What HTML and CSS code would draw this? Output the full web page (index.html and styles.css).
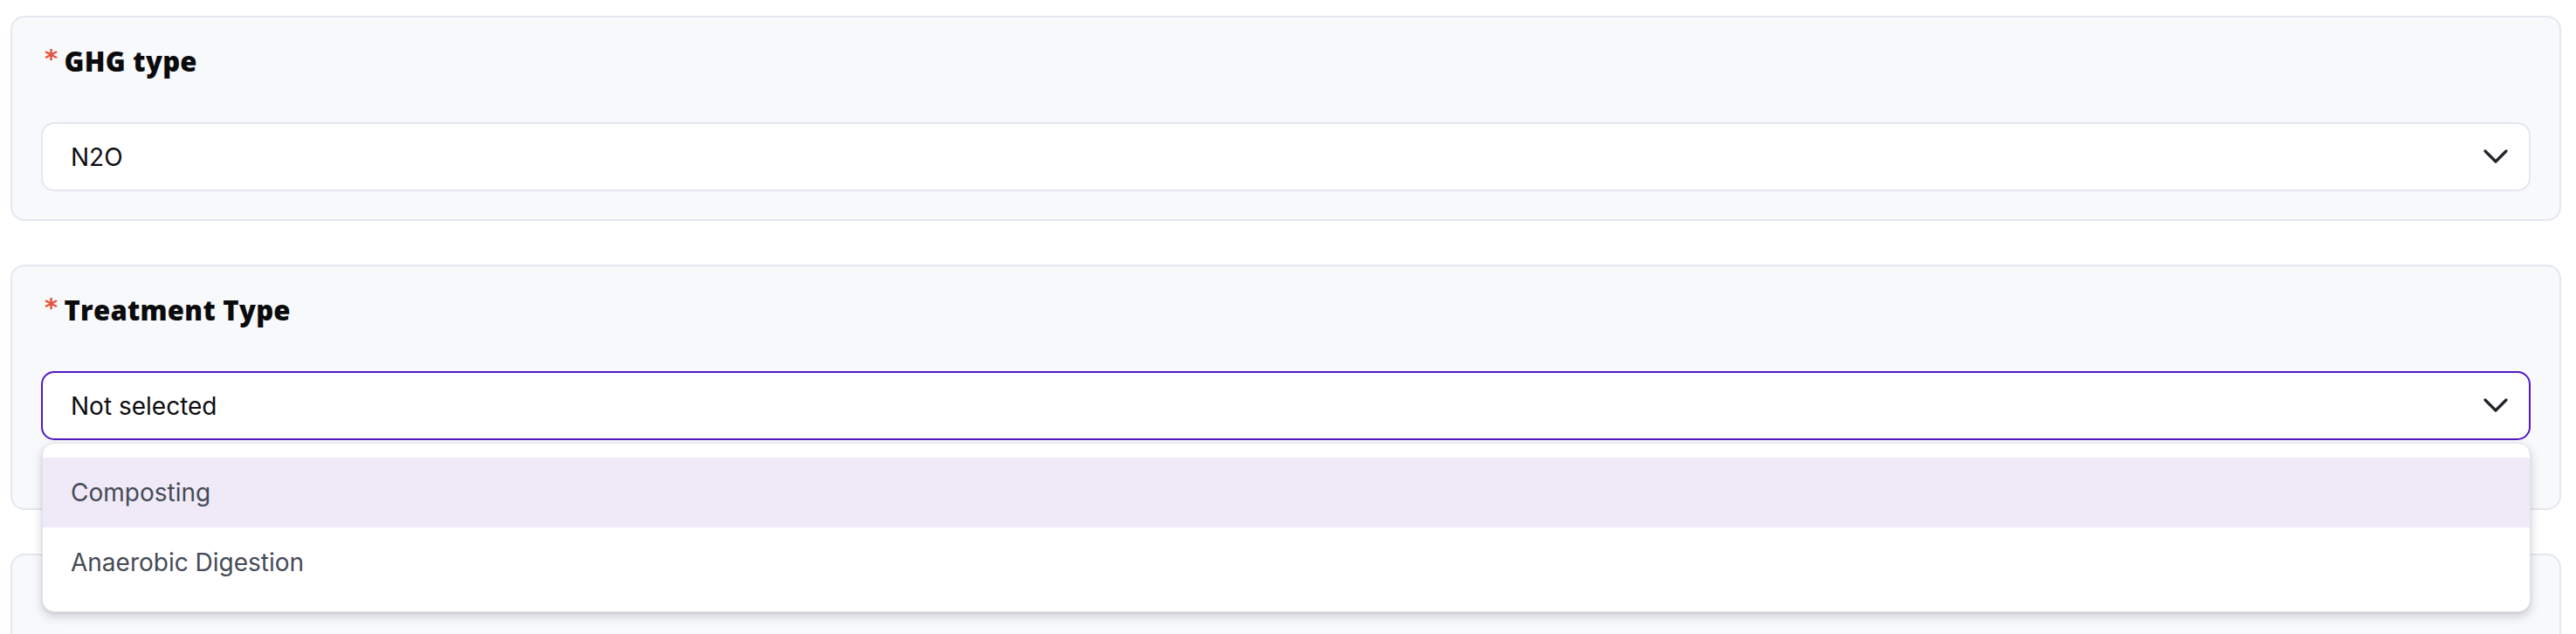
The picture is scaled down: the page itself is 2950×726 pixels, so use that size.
FILE: index.html
```html
<!DOCTYPE html>
<html lang="en">
<head>
<meta charset="utf-8">
<title>Form</title>
<link rel="stylesheet" href="styles.css">
</head>
<body>
<main class="form">
  <section class="card">
    <div class="label"><span class="req">*</span>GHG type</div>
    <div class="select">
      <span class="value">N2O</span>
      <svg class="chev" width="28" height="17" viewBox="0 0 28 17"><path d="M2 2 L14 14 L26 2" fill="none" stroke="#22242b" stroke-width="3.2" stroke-linecap="round" stroke-linejoin="round"/></svg>
    </div>
  </section>
  <section class="card card-open">
    <div class="label"><span class="req">*</span>Treatment Type</div>
    <div class="select-wrap">
      <div class="select focused">
        <span class="value">Not selected</span>
        <svg class="chev" width="28" height="17" viewBox="0 0 28 17"><path d="M2 2 L14 14 L26 2" fill="none" stroke="#22242b" stroke-width="3.2" stroke-linecap="round" stroke-linejoin="round"/></svg>
      </div>
      <ul class="menu">
        <li class="opt active">Composting</li>
        <li class="opt">Anaerobic Digestion</li>
      </ul>
    </div>
  </section>
  <section class="card card-next"></section>
</main>
</body>
</html>
```
FILE: styles.css
```css
html, body {
  margin: 0;
  padding: 0;
  background: #ffffff;
  overflow: hidden;
}
.form {
  display: flex;
  flex-direction: column;
  gap: 50px;
  padding: 18px 17px 0 12px;
}
.card {
  background: #f8f9fb;
  border: 2px solid #e4e7ef;
  border-radius: 16px;
  padding: 28px 33px 32px 33px;
}
.card-open {
  padding-bottom: 78px;
}
.card-next {
  height: 200px;
  padding: 0;
}
.label {
  display: flex;
  align-items: flex-start;
  font-family: "Open Sans", "Liberation Sans", sans-serif;
  font-weight: 800;
  font-size: 31px;
  line-height: 45px;
  color: #0b0b0d;
  margin-bottom: 47px;
  margin-left: 4px;
  letter-spacing: 0.3px;
}
.req {
  color: #e5533d;
  font-size: 29px;
  line-height: 38px;
  margin-right: 7px;
  font-family: "DejaVu Sans", sans-serif;
  font-weight: 700;
}
.select-wrap {
  position: relative;
}
.select {
  box-sizing: border-box;
  height: 79px;
  background: #ffffff;
  border: 2px solid #e4e7ef;
  border-radius: 15px;
  display: flex;
  align-items: center;
  justify-content: space-between;
  padding: 0 24px 0 32px;
}
.select.focused {
  border-color: #5118c4;
}
.value {
  font-family: Inter, "Liberation Sans", sans-serif;
  font-size: 28px;
  color: #0d0d10;
}
.chev {
  display: block;
}
.menu {
  position: absolute;
  top: 82px;
  left: 1px;
  right: 0;
  margin: 0;
  padding: 16px 0;
  list-style: none;
  background: #ffffff;
  border: 1px solid #e2e4ec;
  border-radius: 14px;
  box-shadow: 0 5px 12px rgba(20, 20, 40, 0.18), 0 1px 3px rgba(20, 20, 40, 0.08);
  z-index: 2;
}
.opt {
  height: 80px;
  display: flex;
  align-items: center;
  padding-left: 32px;
  font-family: Inter, "Liberation Sans", sans-serif;
  font-size: 28px;
  color: #454a56;
}
.opt.active {
  background: #f0eaf8;
}
```
